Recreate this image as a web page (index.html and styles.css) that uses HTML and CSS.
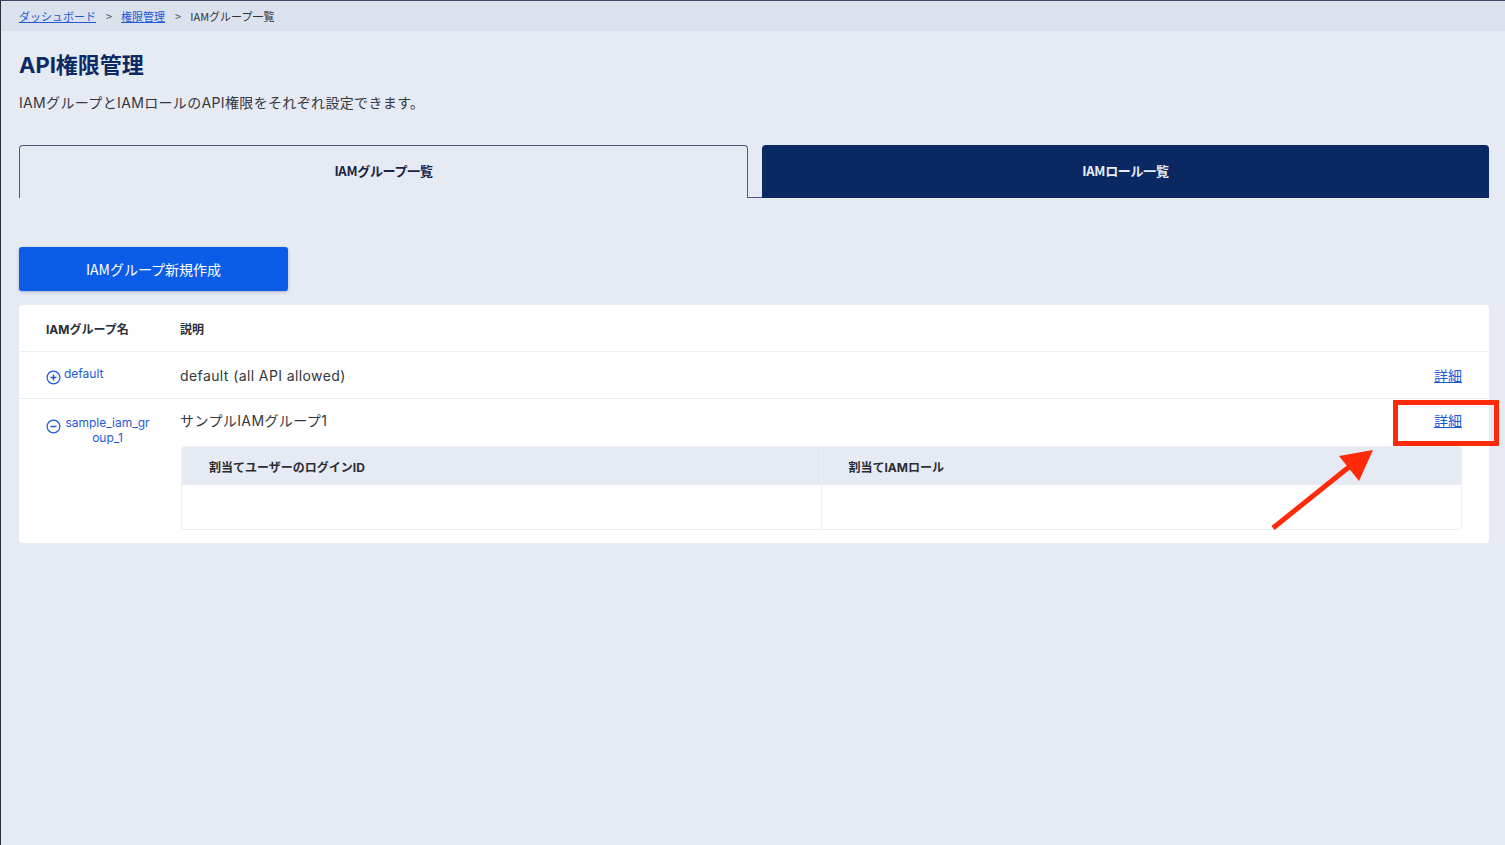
FILE: index.html
```
<!DOCTYPE html>
<html lang="ja">

<head>
    <meta charset="UTF-8">
    <meta name="viewport" content="width=device-width, initial-scale=1.0">
    <title>API権限管理</title>
    <link rel="stylesheet" href="styles.css">
</head>

<body>
    <div class="frame">
        <nav class="breadcrumb">
            <a href="#">ダッシュボード</a>
            <span class="sep">&gt;</span>
            <a href="#">権限管理</a>
            <span class="sep">&gt;</span>
            <span class="current">IAMグループ一覧</span>
        </nav>

        <main class="content">
            <h1 class="page-title">API権限管理</h1>
            <p class="page-desc">IAMグループとIAMロールのAPI権限をそれぞれ設定できます。</p>

            <div class="tabs">
                <div class="tab active">IAMグループ一覧</div>
                <div class="tab">IAMロール一覧</div>
            </div>

            <button type="button" class="button">IAMグループ新規作成</button>

            <div class="card">
                <div class="row head">
                    <div class="cell name">IAMグループ名</div>
                    <div class="cell desc">説明</div>
                    <div class="cell"></div>
                </div>

                <div class="row">
                    <div class="cell name">
                        <a href="#" class="toggle">
                            <svg class="toggle-icon" viewBox="0 0 16 16" width="15" height="15">
                                <circle cx="8" cy="8" r="6.8" fill="none" stroke="currentColor" stroke-width="1.3"/>
                                <path d="M4.8 8h6.4M8 4.8v6.4" stroke="currentColor" stroke-width="1.6"/>
                            </svg>
                            <span class="toggle-label">default</span>
                        </a>
                    </div>
                    <div class="cell desc">default (all API allowed)</div>
                    <div class="cell detail"><a href="#">詳細</a></div>
                </div>

                <div class="row open">
                    <div class="cell name">
                        <a href="#" class="toggle">
                            <svg class="toggle-icon" viewBox="0 0 16 16" width="15" height="15">
                                <circle cx="8" cy="8" r="6.8" fill="none" stroke="currentColor" stroke-width="1.3"/>
                                <path d="M4.8 8h6.4" stroke="currentColor" stroke-width="1.6"/>
                            </svg>
                            <span class="toggle-label">sample_iam_group_1</span>
                        </a>
                    </div>
                    <div class="cell desc">サンプルIAMグループ1</div>
                    <div class="cell detail"><a href="#">詳細</a></div>

                    <div class="sub-table">
                        <div class="sub-head">割当てユーザーのログインID</div>
                        <div class="sub-head">割当てIAMロール</div>
                        <div class="sub-cell"></div>
                        <div class="sub-cell"></div>
                    </div>
                </div>

                <!-- annotation -->
                <div class="mark-box"></div>
                <svg class="mark-arrow" viewBox="0 0 120 100" width="120" height="100">
                    <path d="M8 88L84 27" stroke="#ff2a0a" stroke-width="5" stroke-linecap="butt"/>
                    <polygon points="108,10 74,16 94,41" fill="#ff2a0a"/>
                </svg>
            </div>
        </main>
    </div>
</body>

</html>
```

FILE: styles.css
```
:root {
    --page-bg: #e6eaf3;
    --crumb-bg: #dbe1ed;
    --navy: #0a2862;
    --title: #0d2a64;
    --text: #333840;
    --link: #1d5ad8;
    --primary: #0b5de8;
    --line: #eceff5;
}

* {
    box-sizing: border-box;
}

body {
    margin: 0;
    background-color: var(--page-bg);
    color: var(--text);
    font-family: Inter, "Noto Sans CJK JP", sans-serif;
}

.frame {
    min-height: 845px;
    border-top: 1px solid #3c4868;
    border-left: 1px solid #2c2f38;
}

.breadcrumb {
    height: 30px;
    display: flex;
    align-items: center;
    padding-left: 18px;
    background-color: var(--crumb-bg);
    font-family: "Noto Sans CJK JP", sans-serif;
    font-size: 11px;
    line-height: 1;
}

.breadcrumb a {
    color: var(--link);
    text-decoration: underline;
}

.breadcrumb .sep {
    margin: 0 9px 0 10px;
    color: #555;
}

.breadcrumb .current {
    color: #333;
}

.content {
    padding: 19px 16px 0 18px;
}

.page-title {
    margin: 0;
    font-size: 22px;
    line-height: 30px;
    font-weight: bold;
    color: var(--title);
}

.page-desc {
    margin: 12px 0 0;
    font-size: 14px;
    line-height: 22px;
    letter-spacing: 0.35px;
    color: var(--text);
}

.tabs {
    display: flex;
    gap: 14px;
    margin-top: 31px;
    border-bottom: 1px solid #4d5a7c;
}

.tab {
    flex: 1;
    height: 53px;
    margin-bottom: -1px;
    padding-bottom: 3px;
    display: flex;
    align-items: center;
    justify-content: center;
    font-family: "Noto Sans CJK JP", sans-serif;
    font-size: 13px;
    font-weight: bold;
    letter-spacing: -0.3px;
    border-radius: 4px 4px 0 0;
    background-color: var(--navy);
    color: #e8ecf5;
}

.tab.active {
    background-color: var(--page-bg);
    color: #1a2444;
    border: 1px solid #4d5a7c;
    border-bottom: none;
}

.button {
    display: block;
    width: 269px;
    height: 44px;
    margin-top: 49px;
    border: none;
    border-radius: 3px;
    background-color: var(--primary);
    color: white;
    font-family: "Noto Sans CJK JP", sans-serif;
    font-size: 14px;
    cursor: pointer;
    box-shadow: 0 1px 3px rgba(20, 40, 90, 0.3);
}

.card {
    position: relative;
    margin-top: 14px;
    background-color: white;
    border-radius: 4px;
    padding-bottom: 13px;
}

.row {
    display: grid;
    grid-template-columns: 161px 1fr auto;
    padding-right: 27px;
    border-bottom: 1px solid var(--line);
}

.row.open {
    border-bottom: none;
}

.cell {
    min-height: 46px;
    display: flex;
    align-items: center;
    font-size: 14px;
}

.cell.desc {
    letter-spacing: 0.4px;
}

.cell.name {
    padding-left: 27px;
}

.row.head .cell {
    font-size: 12px;
    font-weight: bold;
    letter-spacing: 0;
    color: #2a2e36;
}

.toggle {
    display: flex;
    align-items: flex-start;
    gap: 3px;
    color: var(--link);
    text-decoration: none;
    font-size: 12px;
    line-height: 15px;
}

.toggle-icon {
    flex: none;
    margin-top: 4px;
}

.toggle-label {
    max-width: 87px;
    text-align: center;
    word-break: break-all;
}

.cell.detail a {
    color: var(--link);
    text-decoration: underline;
}

.row.open .cell {
    align-items: flex-start;
    min-height: 0;
    padding-top: 12px;
    line-height: 20px;
}

.row.open .cell.name {
    grid-row: 1 / 3;
    padding-top: 16px;
}

.sub-table {
    grid-column: 2 / 4;
    display: grid;
    grid-template-columns: 1fr 1fr;
    margin-top: 15px;
    margin-left: 1px;
    border: 1px solid var(--line);
    border-radius: 3px;
    overflow: hidden;
}

.sub-head {
    height: 38px;
    display: flex;
    align-items: center;
    padding-left: 27px;
    background-color: var(--page-bg);
    font-size: 12px;
    font-weight: bold;
    color: #2a2e36;
}

.sub-cell {
    height: 44px;
}

.sub-head:first-child,
.sub-cell:nth-child(3) {
    border-right: 1px solid var(--line);
}

.mark-box {
    position: absolute;
    left: 1374px;
    top: 95px;
    width: 106px;
    height: 46px;
    border: 5px solid #ff2a0a;
}

.mark-arrow {
    position: absolute;
    left: 1246px;
    top: 135px;
}
```
